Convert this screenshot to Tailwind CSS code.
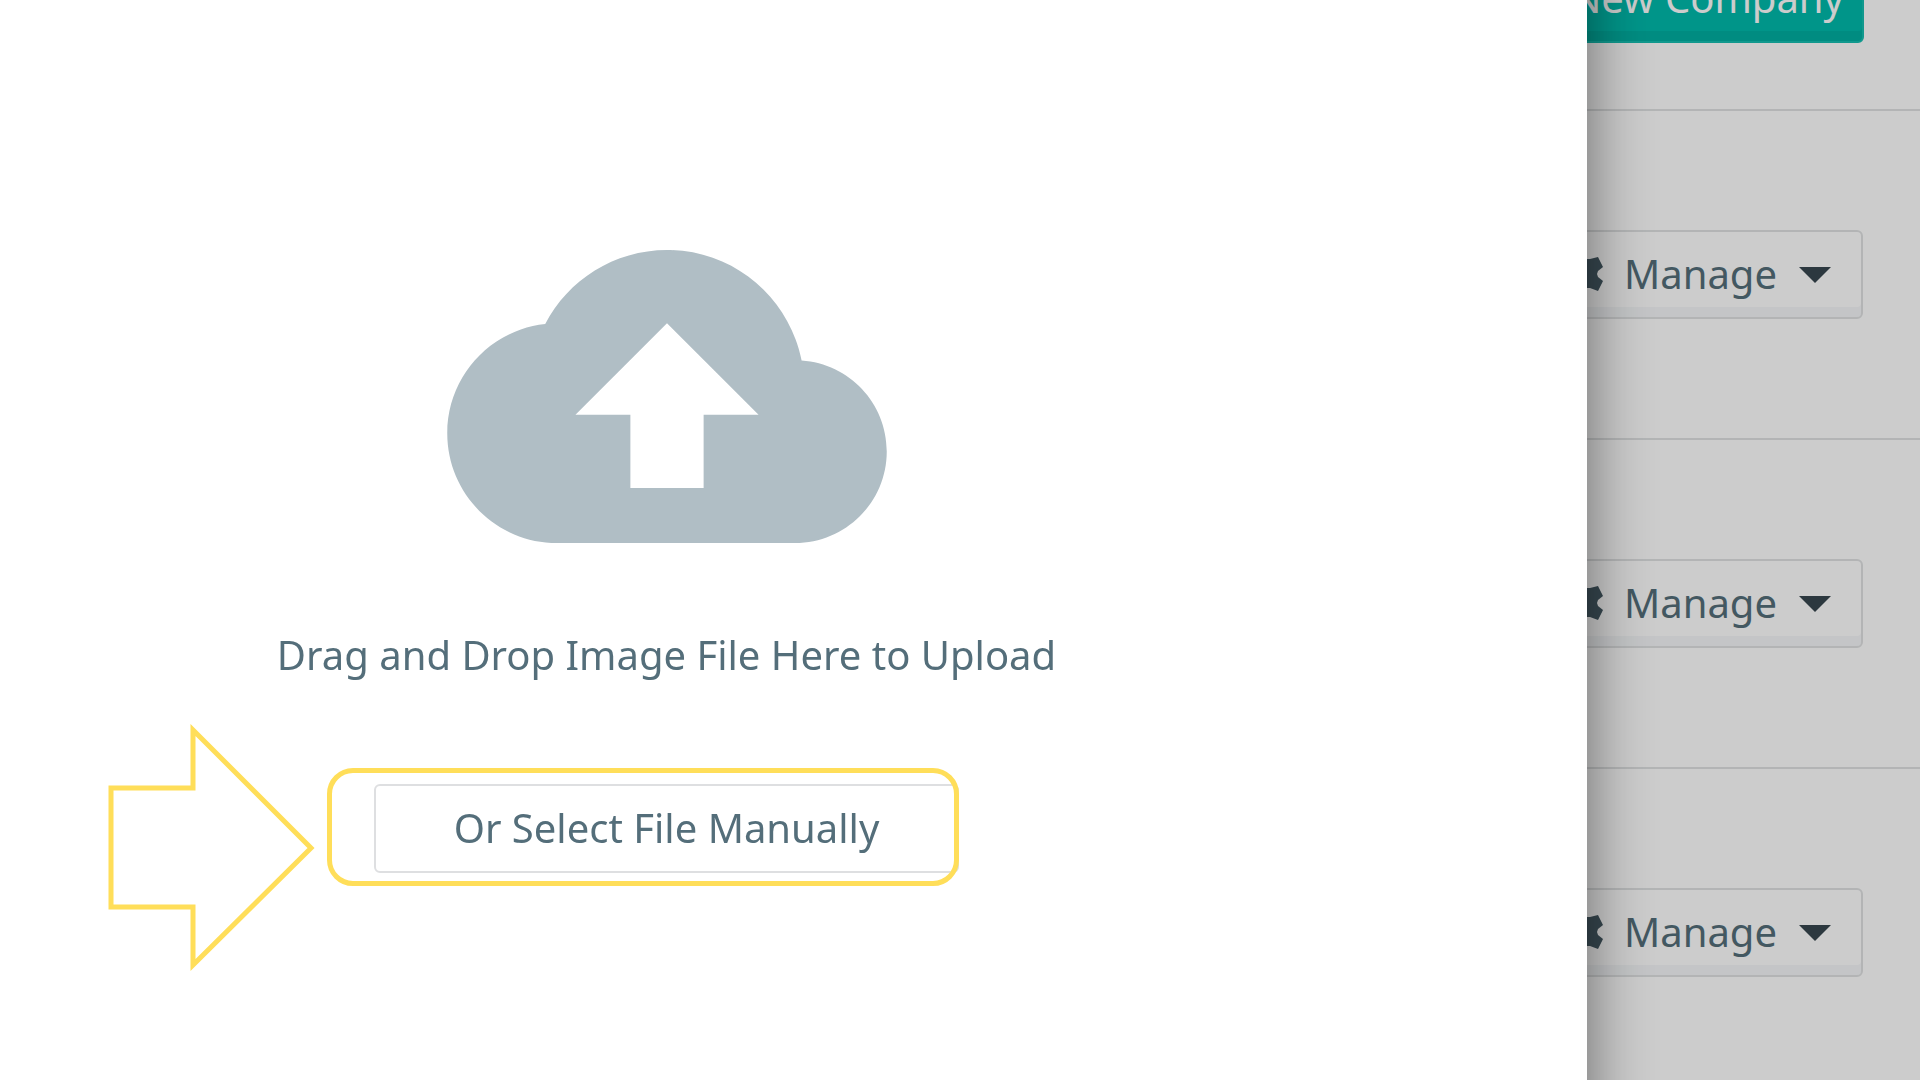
<!DOCTYPE html>
<html lang="en">
<head>
    <meta charset="UTF-8">
    <meta name="viewport" content="width=device-width, initial-scale=1.0">
    <title>Companies</title>
    <script src="https://cdn.jsdelivr.net/npm/@tailwindcss/browser@4"></script>
</head>
<body class="relative h-screen overflow-hidden bg-white font-['Noto_Sans',sans-serif] text-[40px] leading-[56px] text-[#546e7a]">
    <!-- Company list -->
    <main>
        <header class="flex h-[111px] items-end justify-end border-b-2 border-[#e0e2e3] pr-14 pb-[66px]">
            <button class="h-[89px] shrink-0 rounded-md border-2 border-[#14bfb1] bg-[#00bbac] px-[18px] pb-0.5 text-white shadow-[inset_0_-10px_0_#00b0a2]">New Company</button>
        </header>
        <ul>
            <li class="flex h-[329px] items-center justify-end border-b-2 border-[#e0e2e3] pr-[57px]">
                <button class="flex h-[89px] items-center rounded-md border-2 border-[#e0e2e3] pr-[30px] pb-0.5 pl-12 shadow-[inset_0_-10px_0_#f5f7f9]">
                    <svg class="mr-5 h-9 w-9" viewBox="0 0 36 36" fill="#455a64"><path d="M14 3h8l8-2 5 10-5 4-1 3 1 3 5 4-5 10-8-3h-8l-8 3-5-10 5-4 1-3-1-3-5-4L6 1z"/></svg>
                    Manage
                    <svg class="mt-0.5 ml-[22px] h-4 w-8" viewBox="0 0 32 16" fill="#37474f"><path d="M0 0h32L16 16z"/></svg>
                </button>
            </li>
            <li class="flex h-[329px] items-center justify-end border-b-2 border-[#e0e2e3] pr-[57px]">
                <button class="flex h-[89px] items-center rounded-md border-2 border-[#e0e2e3] pr-[30px] pb-0.5 pl-12 shadow-[inset_0_-10px_0_#f5f7f9]">
                    <svg class="mr-5 h-9 w-9" viewBox="0 0 36 36" fill="#455a64"><path d="M14 3h8l8-2 5 10-5 4-1 3 1 3 5 4-5 10-8-3h-8l-8 3-5-10 5-4 1-3-1-3-5-4L6 1z"/></svg>
                    Manage
                    <svg class="mt-0.5 ml-[22px] h-4 w-8" viewBox="0 0 32 16" fill="#37474f"><path d="M0 0h32L16 16z"/></svg>
                </button>
            </li>
            <li class="flex h-[329px] items-center justify-end border-b-2 border-[#e0e2e3] pr-[57px]">
                <button class="flex h-[89px] items-center rounded-md border-2 border-[#e0e2e3] pr-[30px] pb-0.5 pl-12 shadow-[inset_0_-10px_0_#f5f7f9]">
                    <svg class="mr-5 h-9 w-9" viewBox="0 0 36 36" fill="#455a64"><path d="M14 3h8l8-2 5 10-5 4-1 3 1 3 5 4-5 10-8-3h-8l-8 3-5-10 5-4 1-3-1-3-5-4L6 1z"/></svg>
                    Manage
                    <svg class="mt-0.5 ml-[22px] h-4 w-8" viewBox="0 0 32 16" fill="#37474f"><path d="M0 0h32L16 16z"/></svg>
                </button>
            </li>
        </ul>
    </main>

    <!-- Upload dialog -->
    <div class="fixed inset-0 flex bg-black/20 pr-[333px]">
        <section role="dialog" aria-label="Upload image" class="-my-20 grow bg-white pt-[330px] shadow-[0_0_60px_rgba(0,0,0,0.5)]">
            <div class="flex w-[1333px] flex-col items-center">
                <svg class="h-[293px] w-[440px]" viewBox="0 4 24 16" fill="#b0bec5"><path d="M19.35 10.04C18.67 6.59 15.64 4 12 4 9.11 4 6.6 5.64 5.35 8.04 2.34 8.36 0 10.91 0 14c0 3.31 2.69 6 6 6h13c2.76 0 5-2.24 5-5 0-2.64-2.05-4.78-4.65-4.96zM14 13v4h-4v-4H7l5-5 5 5h-3z"/></svg>
                <p class="mt-[84px]">Drag and Drop Image File Here to Upload</p>
                <div class="relative mt-[101px]">
                    <button class="h-[89px] w-[585px] rounded-md border-2 border-[#dedfe1] pb-0.5">Or Select File Manually</button>
                    <!-- Highlight box and pointer -->
                    <div class="absolute -top-4 -left-[47px] h-[118px] w-[632px] rounded-[26px] border-5 border-[#ffde59]"></div>
                    <svg class="absolute -top-[60px] -left-[266px] h-[248px] w-[208px]" viewBox="0 0 208 248" fill="none" stroke="#ffde59" stroke-width="5"><path d="M3 64H85V6L203 124 85 241V183H3z"/></svg>
                </div>
            </div>
        </section>
    </div>
</body>
</html>
